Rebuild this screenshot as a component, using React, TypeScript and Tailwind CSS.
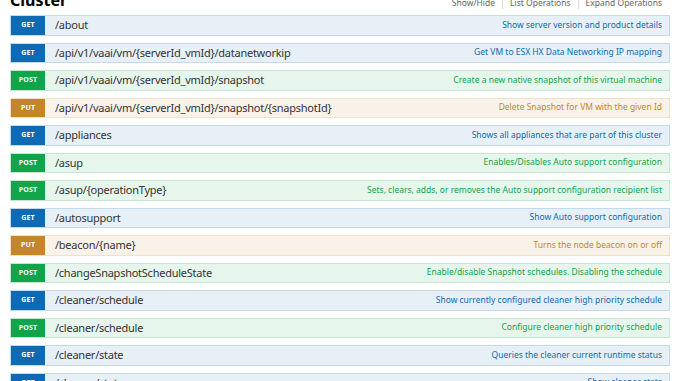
import React from "react";

type Method = "GET" | "POST" | "PUT";

interface Operation {
  method: Method;
  path: string;
  summary: string;
}

const operations: Operation[] = [
  { method: "GET", path: "/about", summary: "Show server version and product details" },
  { method: "GET", path: "/api/v1/vaai/vm/{serverId_vmId}/datanetworkip", summary: "Get VM to ESX HX Data Networking IP mapping" },
  { method: "POST", path: "/api/v1/vaai/vm/{serverId_vmId}/snapshot", summary: "Create a new native snapshot of this virtual machine" },
  { method: "PUT", path: "/api/v1/vaai/vm/{serverId_vmId}/snapshot/{snapshotId}", summary: "Delete Snapshot for VM with the given Id" },
  { method: "GET", path: "/appliances", summary: "Shows all appliances that are part of this cluster" },
  { method: "POST", path: "/asup", summary: "Enables/Disables Auto support configuration" },
  { method: "POST", path: "/asup/{operationType}", summary: "Sets, clears, adds, or removes the Auto support configuration recipient list" },
  { method: "GET", path: "/autosupport", summary: "Show Auto support configuration" },
  { method: "PUT", path: "/beacon/{name}", summary: "Turns the node beacon on or off" },
  { method: "POST", path: "/changeSnapshotScheduleState", summary: "Enable/disable Snapshot schedules. Disabling the schedule" },
  { method: "GET", path: "/cleaner/schedule", summary: "Show currently configured cleaner high priority schedule" },
  { method: "POST", path: "/cleaner/schedule", summary: "Configure cleaner high priority schedule" },
  { method: "GET", path: "/cleaner/state", summary: "Queries the cleaner current runtime status" },
  { method: "GET", path: "/cleaner/stats", summary: "Show cleaner stats" },
];

// Colours per HTTP verb, swagger-ui style
const getMethodStyle = (method: Method) => {
  switch (method) {
    case "GET":
      return {
        row: "bg-[#e7f0f7] border-[#c3d9ec]",
        badge: "bg-[#0f6ab4]",
        text: "text-[#0f6ab4]",
      };
    case "POST":
      return {
        row: "bg-[#e7f6ec] border-[#c3e8d1]",
        badge: "bg-[#10a54a]",
        text: "text-[#10a54a]",
      };
    case "PUT":
      return {
        row: "bg-[#f9f2e9] border-[#f0e0ca]",
        badge: "bg-[#c5862b]",
        text: "text-[#c5862b]",
      };
  }
};

function OperationRow({ op }: { op: Operation }) {
  const style = getMethodStyle(op.method);
  return (
    <li className={`flex h-[20.5px] items-stretch border ${style.row}`}>
      <span
        className={`flex w-[34px] shrink-0 items-center justify-center text-[7px] font-bold tracking-wide text-white ${style.badge}`}
      >
        {op.method}
      </span>
      <span className="ml-[10px] flex items-center whitespace-nowrap text-[11px] tracking-[-0.25px] text-[#333]">
        {op.path}
      </span>
      <span
        className={`ml-auto flex items-center whitespace-nowrap pr-[7px] text-[8.5px] ${style.text}`}
      >
        {op.summary}
      </span>
    </li>
  );
}

export default function App() {
  return (
    <div
      className="h-[381px] w-[678px] overflow-hidden bg-white pl-[10px] pr-[8px]"
      style={{ fontFamily: '"Noto Sans", "Open Sans", sans-serif' }}
    >
      <div className="flex h-[15px] items-start justify-between">
        <h2 className="mt-[-8px] text-[16px] font-bold leading-[17px] text-[#000]">Cluster</h2>
        <div className="mt-[-3px] flex items-center pr-[8px] text-[8.5px] leading-[12px] text-[#666]">
          <span>Show/Hide</span>
          <span className="mx-[7px] h-[12px] w-px bg-[#ddd]" />
          <span>List Operations</span>
          <span className="mx-[7px] h-[12px] w-px bg-[#ddd]" />
          <span>Expand Operations</span>
        </div>
      </div>
      <ul className="flex flex-col gap-[7px]">
        {operations.map((op, i) => (
          <OperationRow key={i} op={op} />
        ))}
      </ul>
    </div>
  );
}
